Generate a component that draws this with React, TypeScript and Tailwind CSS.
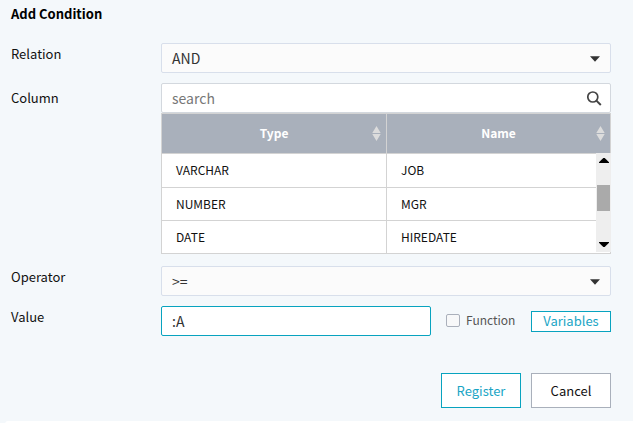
import type { ReactNode } from 'react';

const rows = [
  { type: 'VARCHAR', name: 'JOB', height: 'h-[34px] pb-px' },
  { type: 'NUMBER', name: 'MGR', height: 'h-[33px]' },
  { type: 'DATE', name: 'HIREDATE', height: 'h-[33px]' },
];

function Field({ label, className, children }: { label: string; className: string; children: ReactNode }) {
  return (
    <div className={`flex items-start ${className}`}>
      <div className="w-[150px] text-[13px] leading-[22px] text-[#111]">{label}</div>
      <div className="w-[450px]">{children}</div>
    </div>
  );
}

function Select({ value }: { value: string }) {
  return (
    <div className="flex h-[30px] items-center justify-between rounded-[2px] border border-[#d8dfeb] bg-[#fbfbfb] pr-[10px] pl-[10px] text-[14px] leading-[28px] text-[#333]">
      <span>{value}</span>
      <svg width="10" height="6" viewBox="0 0 10 6" className="mt-px">
        <path d="M0 0.2h10L5 5.7z" fill="#333" />
      </svg>
    </div>
  );
}

function HeaderCell({ label, className }: { label: string; className: string }) {
  return (
    <div className={`flex items-center ${className}`}>
      <span className="w-2 shrink-0" />
      <span className="flex-1 pb-[2px] pl-[6px] text-center">{label}</span>
      <svg width="9" height="15" viewBox="0 0 9 15" className="mr-[5px] shrink-0">
        <path d="M4.5 0L8.7 7H0.3zM0.3 8H8.7L4.5 15z" fill="#dcdcdc" />
      </svg>
    </div>
  );
}

export default function App() {
  return (
    <div className="flex h-[423px] w-[633px] flex-col overflow-hidden bg-[#f4f8fb] pl-[11px] font-['Noto_Sans_CJK_KR','Noto_Sans',sans-serif] text-[#111]">
      <h1 className="mt-[3px] h-[22px] text-[13px] leading-[22px] font-bold text-black">Add Condition</h1>

      <Field label="Relation" className="mt-[18px] h-[30px]">
        <Select value="AND" />
      </Field>

      <Field label="Column" className="mt-[10px] h-[171px] [&>div:first-child]:pt-[4px]">
        <div className="flex h-[30px] items-center justify-between rounded-[2px] border border-[#d3d8de] bg-white pr-[8px] pl-[10px]">
          <span className="text-[14px] leading-[28px] text-[#777]">search</span>
          <svg width="15" height="15" viewBox="0 0 15 15" fill="none" stroke="#444">
            <circle cx="5.8" cy="6" r="5" strokeWidth="1.7" />
            <path d="M9.4 9.6L13.8 14" strokeWidth="2" />
          </svg>
        </div>
        <div className="h-[141px] border-x border-b border-[#d3d3d3] bg-white">
          <div className="flex h-[41px] border-t border-b border-[#d3d3d3] bg-[#a9b0bb] text-[12px] leading-5 font-bold text-white">
            <HeaderCell label="Type" className="w-[225px] border-r border-[#d3d3d3]" />
            <HeaderCell label="Name" className="w-[223px]" />
          </div>
          <div className="flex h-[99px]">
            <div className="h-[99px] w-[434px] shrink-0 overflow-hidden text-[12px] leading-5 text-[#111]">
              {rows.map((row) => (
                <div key={row.type} className="flex border-b border-[#d3d3d3]">
                  <div className={`-mb-px flex w-[225px] items-center border-r border-[#d3d3d3] pl-[14px] ${row.height}`}>
                    <span className="-mt-[2px]">{row.type}</span>
                  </div>
                  <div className={`-mb-px flex items-center pl-[14px] ${row.height}`}>
                    <span className="-mt-[2px]">{row.name}</span>
                  </div>
                </div>
              ))}
            </div>
            <div className="-mt-px flex h-[99px] w-[15px] shrink-0 flex-col items-center bg-[#eee]">
              <svg width="10" height="6" viewBox="0 0 10 6" className="mt-[5px]">
                <path d="M0 5V4.3L4.3 0H5.7L10 4.3V5z" fill="#000" />
              </svg>
              <div className="mt-[21px] h-[26px] w-[13px] bg-[#aaa]" />
              <svg width="10" height="6" viewBox="0 0 10 6" className="mt-[30px]">
                <path d="M0 1V1.7L4.3 6H5.7L10 1.7V1z" fill="#000" />
              </svg>
            </div>
          </div>
        </div>
      </Field>

      <Field label="Operator" className="mt-[12px] h-[30px]">
        <Select value=">=" />
      </Field>

      <Field label="Value" className="mt-[10px] h-[30px]">
        <div className="flex h-[30px] items-center">
          <div className="h-[30px] w-[270px] rounded-[2px] border border-[#08a3bf] bg-white pl-[10px] text-[14px] leading-[28px] text-[#333]">
            :A
          </div>
          <div className="mb-px ml-[15px] h-[13px] w-[14px] rounded-[2px] border border-[#aab0bb] bg-[#f7f8f9]" />
          <span className="ml-[6px] w-[65px] pb-[2px] text-[12px] leading-5 text-[#555]">Function</span>
          <button className="h-[21px] w-20 border border-[#08a3bf] bg-white text-[13px] leading-[18px] text-[#19a5c5]">
            Variables
          </button>
        </div>
      </Field>

      <div className="mt-[37px] flex w-[600px] shrink-0 justify-end gap-[10px] text-[13px] leading-[34px]">
        <button className="h-[35px] w-20 border border-[#08a3bf] bg-white text-[#19a5c5]">Register</button>
        <button className="h-[35px] w-20 border border-[#a9b0bb] bg-white text-[#111]">Cancel</button>
      </div>
      <div className="mt-[13px] -ml-[6px] h-[6px] w-[640px] shrink-0 rounded-tl-[3px] bg-white" />
    </div>
  );
}
